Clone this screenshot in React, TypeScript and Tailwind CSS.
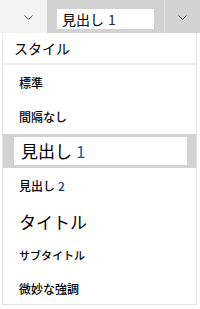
import React from "react";

const jp = { fontFamily: '"Noto Sans CJK JP", "Noto Sans", sans-serif' };

function Chevron() {
  return (
    <svg width="9" height="5" viewBox="0 0 9 5" className="block">
      <path d="M0.5 0.5 L4.5 4.5 L8.5 0.5" fill="none" stroke="#555" strokeWidth="1" />
    </svg>
  );
}

type Item = { label: string; num?: string; h: string; size: string };

const items: Item[] = [
  { label: "標準", h: "h-[35px]", size: "text-[12px] font-medium" },
  { label: "間隔なし", h: "h-[34px]", size: "text-[12px] font-medium" },
];

const rest: Item[] = [
  { label: "見出し", num: "2", h: "h-[36px]", size: "text-[12px] font-medium" },
  { label: "タイトル", h: "h-[35px]", size: "text-[17px] font-normal" },
  { label: "サブタイトル", h: "h-[33px]", size: "text-[11px] font-medium" },
  { label: "微妙な強調", h: "h-[33px]", size: "text-[12px] font-medium" },
];

function Row({ label, num, h, size }: Item) {
  return (
    <div className={`flex items-center pl-[16px] ${h} ${size} text-black`}>
      <span>{label}</span>
      {num && <span className="ml-[3px] text-[#1f3f78]">{num}</span>}
    </div>
  );
}

export default function App() {
  return (
    <div className="relative h-[309px] w-[200px] overflow-hidden bg-white" style={jp}>
      <div className="flex h-[33px]">
        <div className="flex w-[47px] items-center justify-end bg-[#f3f3f3] pr-[14px] pt-[2px]">
          <Chevron />
        </div>
        <div className="flex w-[117px] items-start bg-[#d2d2d2] px-[10px] pt-[9px]">
          <div className="flex h-[20px] w-full items-center bg-white pl-[5px] text-[14px] text-black">
            見出し<span className="ml-[4px] text-[#2a2a40]">1</span>
          </div>
        </div>
        <div className="w-[1px] bg-[#e6e6e6]" />
        <div className="flex flex-1 items-center justify-center bg-[#d2d2d2] pt-[2px]">
          <Chevron />
        </div>
      </div>

      <div className="mx-[2px] mr-[3px] h-[272px] border-x border-b border-[#e3e3e3]">
        <div className="flex h-[30px] items-center pl-[11px] text-[14px] text-black">スタイル</div>
        <div className="h-[2px] bg-[#ededed]" />
        {items.map((it) => (
          <Row key={it.label} {...it} />
        ))}
        <div className="flex h-[34px] bg-[#d2d2d2] py-[3px] pl-[11px] pr-[9px]">
          <div className="flex flex-1 items-center bg-white pl-[7px] text-[17px] text-black">
            見出し<span className="ml-[4px] text-[#1659b3]">1</span>
          </div>
        </div>
        {rest.map((it) => (
          <Row key={it.label} {...it} />
        ))}
      </div>
    </div>
  );
}
